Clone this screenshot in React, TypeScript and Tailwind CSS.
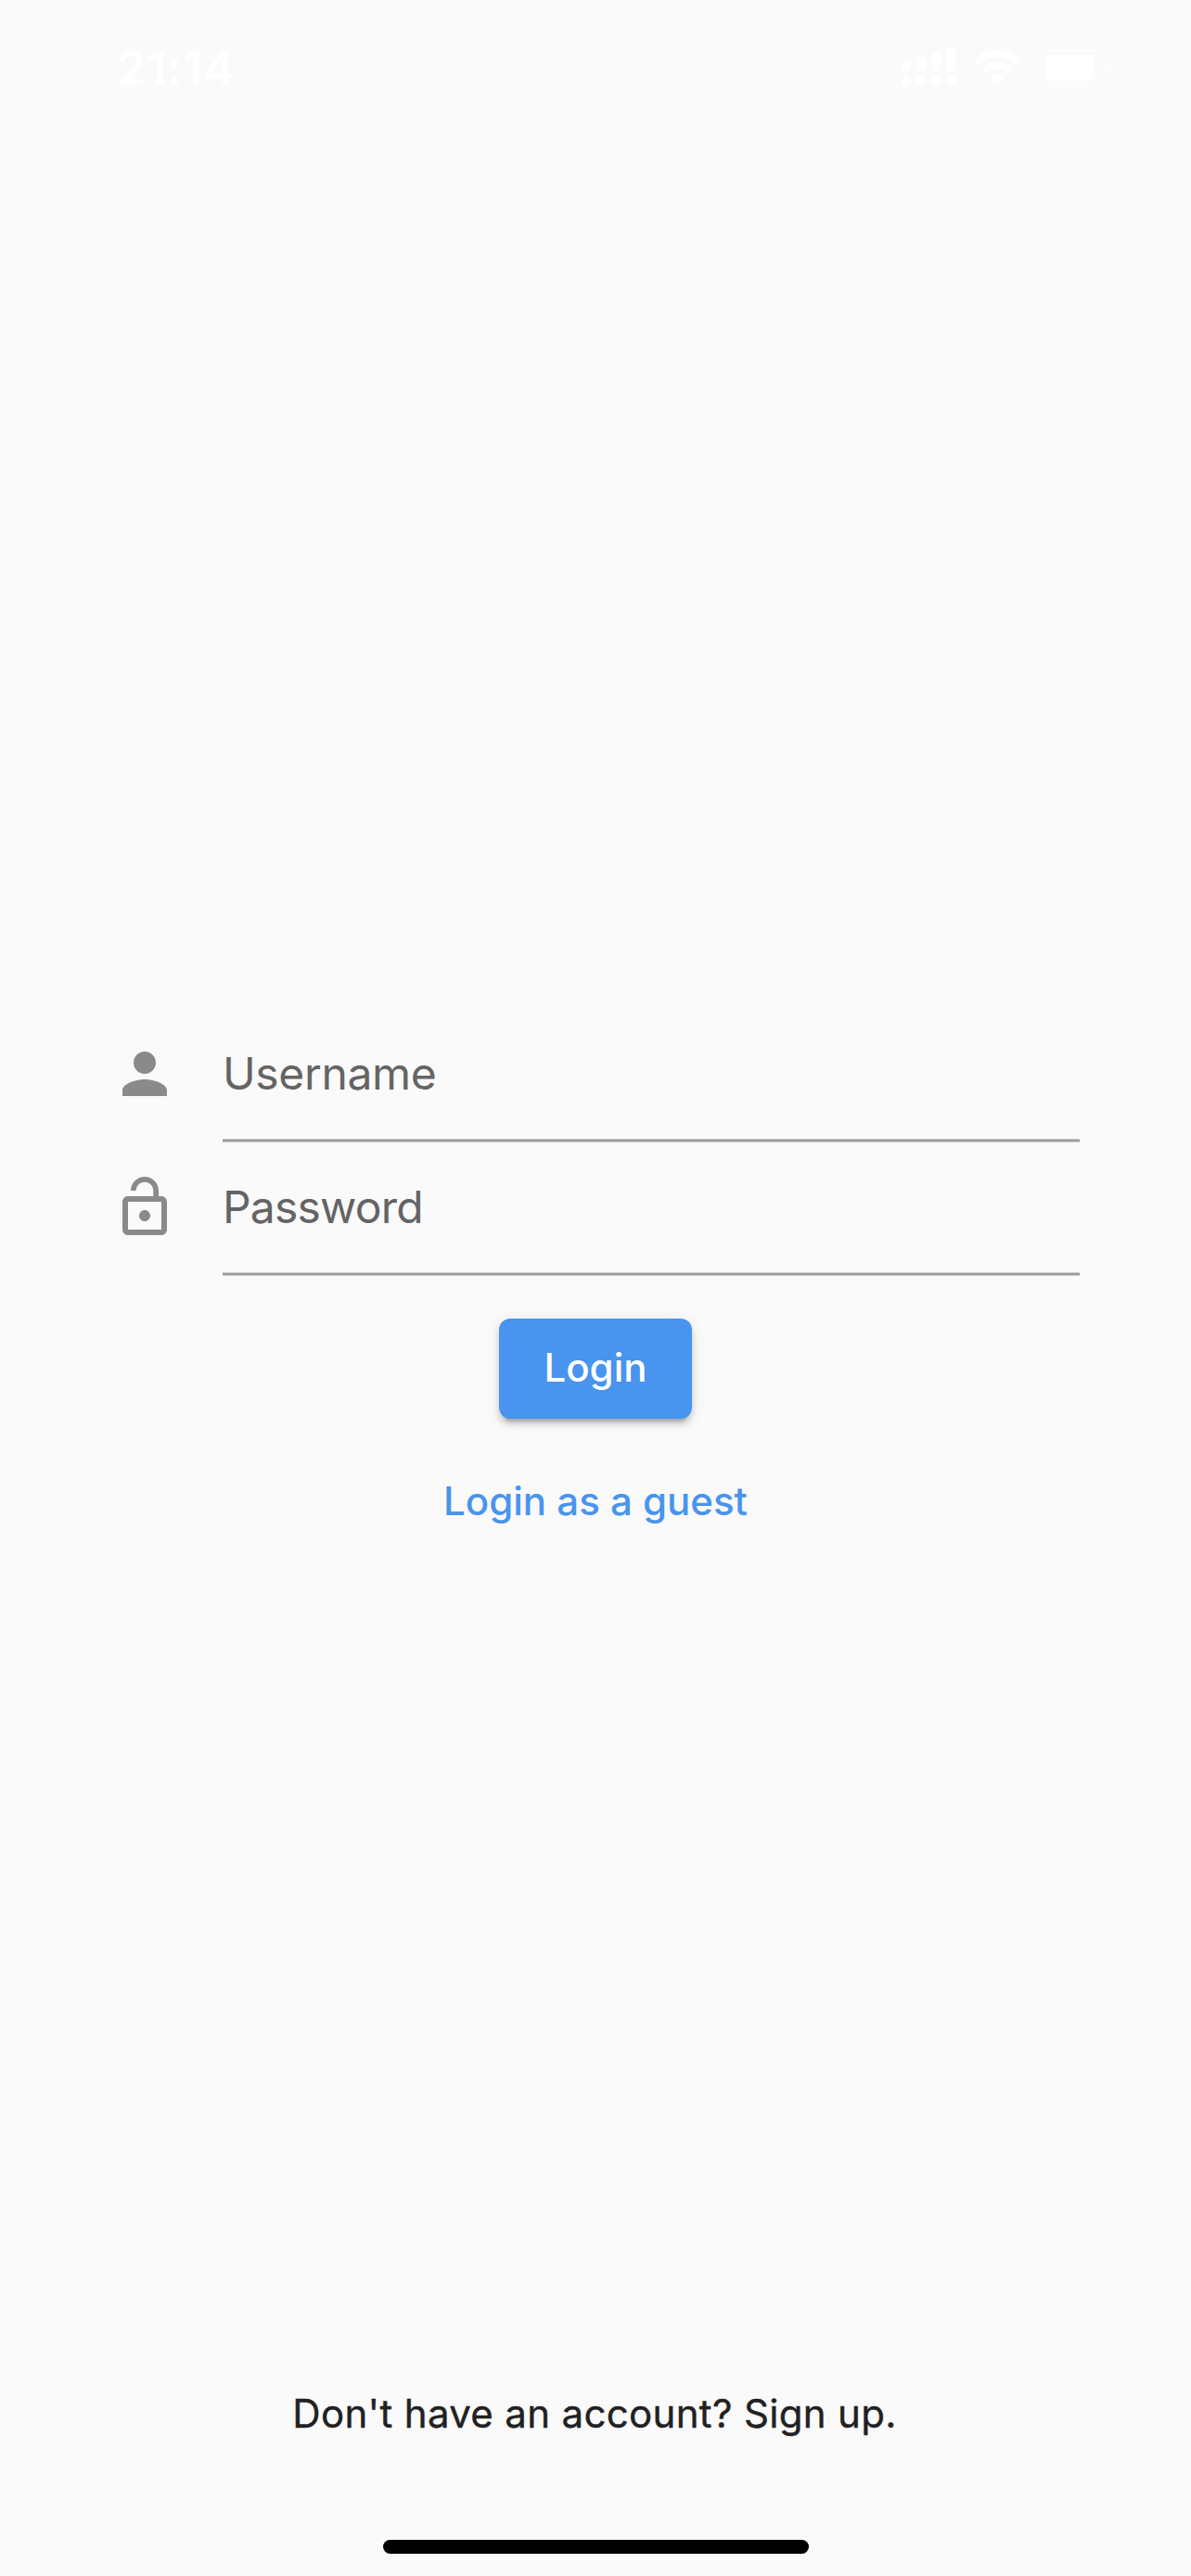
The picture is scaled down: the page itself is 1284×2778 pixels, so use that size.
import type { ReactNode } from "react";

function StatusBar() {
  return (
    <header className="flex h-[140px] items-start justify-between pt-[43px] pr-[82px] pl-[126px] text-white">
      <span className="text-[50px] leading-[60px] font-semibold tracking-[1.1px]">21:14</span>
      <div className="flex h-[60px] items-start pt-[9px]">
        <svg className="mr-[18px] h-[41px] w-[59px]" viewBox="0 0 59 41" fill="currentColor">
          <rect x="0" y="13" width="10.3" height="12" rx="4.5" />
          <rect x="16.2" y="10" width="10.3" height="15" rx="4.5" />
          <rect x="32.3" y="5" width="10.3" height="20" rx="4.5" />
          <rect x="48.4" y="0" width="10.3" height="25" rx="4.5" />
          <rect x="0" y="29.6" width="10.3" height="11.4" rx="4.8" />
          <rect x="16.2" y="29.6" width="10.3" height="11.4" rx="4.8" />
          <rect x="32.3" y="29.6" width="10.3" height="11.4" rx="4.8" />
          <rect x="48.4" y="29.6" width="10.3" height="11.4" rx="4.8" />
        </svg>
        <svg className="mt-[1px] mr-[19px] h-[39px] w-[52px]" viewBox="0 0 52 39" fill="currentColor">
          <path d="M26 1C16.3 1 7.600 4.700 1.300 10.800Q.5 11.700 1.300 12.500L5.100 16.300Q6 17.100 6.900 16.300C12 11.600 18.700 9 26 9S40 11.600 45.100 16.300Q46 17.100 46.900 16.300L50.700 12.500Q51.500 11.700 50.700 10.800C44.400 4.700 35.700 1 26 1Z" />
          <path d="M26 13.700C19.800 13.700 14.200 16 10 19.900Q9.200 20.700 10 21.500L13.900 25.300Q14.700 26.100 15.600 25.300C18.400 22.900 22 21.400 26 21.400S33.600 22.900 36.400 25.300Q37.300 26.100 38.100 25.300L42 21.500Q42.800 20.700 42 19.900C37.800 16 32.200 13.700 26 13.700Z" />
          <path d="M26 26.400C23.200 26.400 20.700 27.400 18.800 29Q18 29.800 18.800 30.600L25.100 37.300Q26 38.200 26.900 37.300L33.200 30.600Q34 29.800 33.200 29C31.300 27.400 28.800 26.400 26 26.400Z" />
        </svg>
        <svg className="mt-[1px] h-[40px] w-[82px]" viewBox="0 0 82 40" fill="none">
          <rect x="1.500" y="1.500" width="72.500" height="36" rx="11" stroke="currentColor" strokeWidth="3" opacity="0.4" />
          <rect x="6" y="6" width="53" height="27.500" rx="6.500" fill="currentColor" />
          <path d="M77.500 13.500C80.500 14.800 82 17 82 19.500S80.500 24.200 77.500 25.500Z" fill="currentColor" opacity="0.4" />
        </svg>
      </div>
    </header>
  );
}

function Icon({ d }: { d: string }) {
  return (
    <svg className="mt-[34px] mr-12 h-[72px] w-[72px] shrink-0 text-[#8a8a8a]" viewBox="0 0 24 24" fill="currentColor">
      <path d={d} />
    </svg>
  );
}

function Field({ icon, children }: { icon: ReactNode; children: ReactNode }) {
  return (
    <div className="flex h-[144px]">
      {icon}
      <div className="flex flex-1 flex-col justify-between pt-10">
        <span className="text-[48px] leading-[60px] text-[#646464]">{children}</span>
        <div className="h-1 border-y border-[#cacaca] bg-[#9b9b9b]" />
      </div>
    </div>
  );
}

const PERSON =
  "M12 12c2.21 0 4-1.790 4-4s-1.790-4-4-4-4 1.790-4 4 1.790 4 4 4zm0 2c-2.670 0-8 1.340-8 4v2h16v-2c0-2.660-5.330-4-8-4z";
const LOCK_OPEN =
  "M12 17c1.100 0 2-.9 2-2s-.9-2-2-2-2 .9-2 2 .9 2 2 2zm6-9h-1V6c0-2.760-2.240-5-5-5S7 3.240 7 6h1.900c0-1.710 1.390-3.100 3.100-3.100 1.710 0 3.100 1.390 3.100 3.100v2H6c-1.100 0-2 .9-2 2v10c0 1.100.9 2 2 2h12c1.100 0 2-.9 2-2V10c0-1.100-.9-2-2-2zm0 12H6V10h12v10z";

export default function App() {
  return (
    <div className="flex h-[2778px] w-[1284px] flex-col overflow-hidden bg-[#fafafa] font-['Inter',sans-serif]">
      <StatusBar />
      <main className="mt-[948px] flex flex-1 flex-col pr-[120px] pl-[120px]">
        <Field icon={<Icon d={PERSON} />}>
          <span className="tracking-[-0.36px]">Username</span>
        </Field>
        <Field icon={<Icon d={LOCK_OPEN} />}>
          <span className="tracking-[-0.8px]">Password</span>
        </Field>
        <button className="mt-[46px] flex h-[108px] w-[208px] justify-center self-center rounded-xl bg-[#4894ee] pt-[27px] text-[42px] leading-[51px] font-medium text-white shadow-[0_9px_3px_-6px_rgba(0,0,0,0.16),0_6px_6px_0_rgba(0,0,0,0.14),0_3px_15px_0_rgba(0,0,0,0.1)]">
          Login
        </button>
        <button className="mt-[63px] self-center text-[42px] leading-[51px] font-medium text-[#4894ee]">
          Login as a guest
        </button>
      </main>
      <footer className="flex h-[201px] flex-col items-center">
        <p className="pr-[2px] text-[42px] leading-[51px] tracking-[0.33px] whitespace-nowrap text-[#212121] [-webkit-text-stroke:0.4px_#212121]">
          Don't have an account? Sign up.
        </p>
        <div className="mt-[111px] h-[15px] w-[459px] rounded-full bg-black" />
      </footer>
    </div>
  );
}
